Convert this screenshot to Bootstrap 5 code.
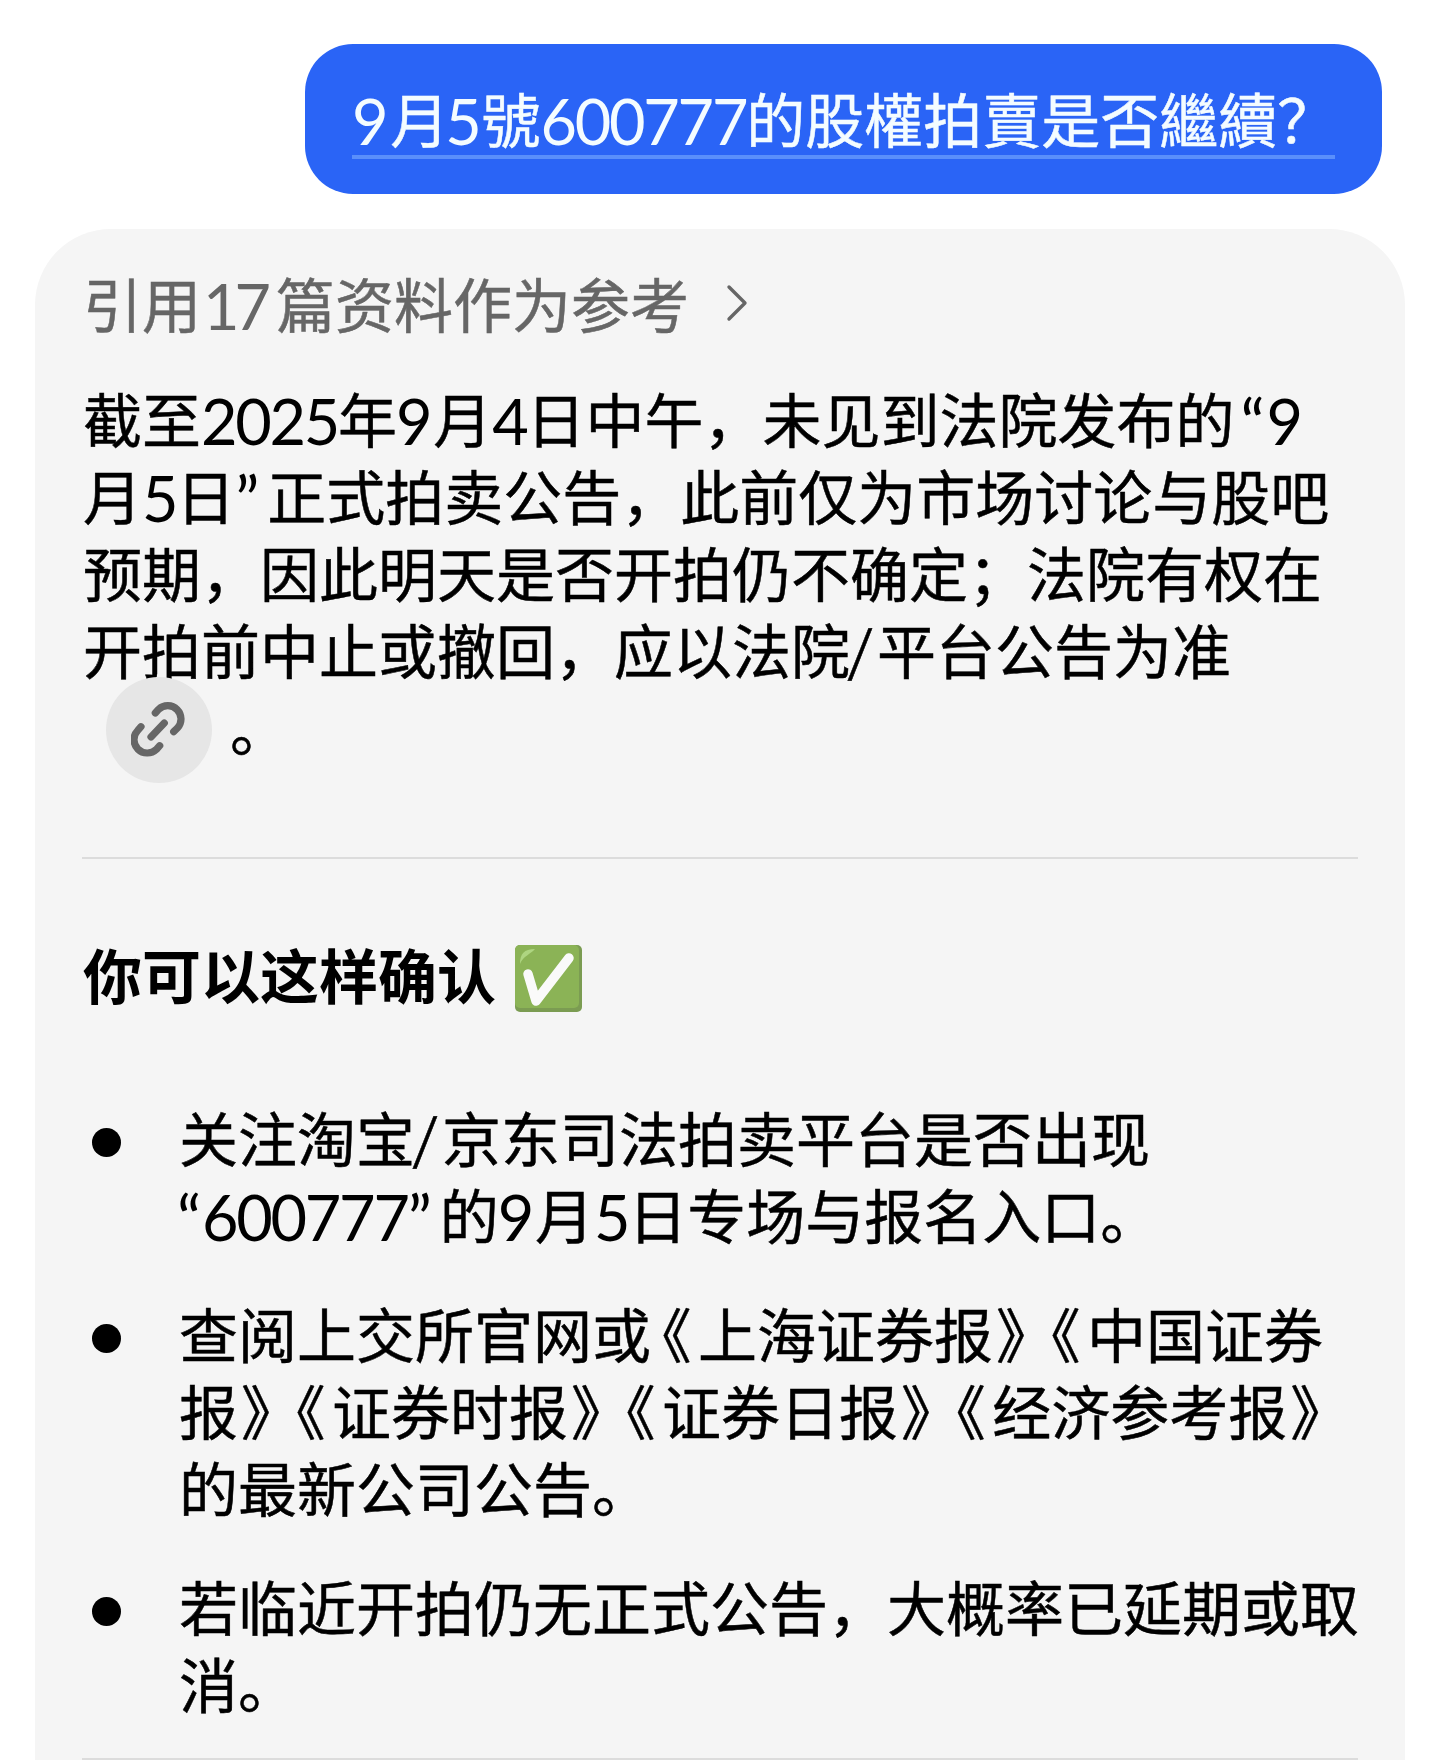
<!DOCTYPE html>
<html lang="zh-CN">
<head>
<meta charset="utf-8">
<meta name="viewport" content="width=device-width, initial-scale=1">
<title>600777</title>
<link href="https://cdn.jsdelivr.net/npm/bootstrap@5.3.0/dist/css/bootstrap.min.css" rel="stylesheet">
<style>
  body { font-family: "Noto Sans CJK SC", sans-serif; font-size: 59px; line-height: 77px; color: #000; background: #fff; font-kerning: none; text-spacing-trim: space-all; -webkit-text-stroke: .5px currentColor; }
  .chat { height: 1760px; }
  .ask { margin: 44px 58px 0 0; width: 1077px; height: 150px; border-radius: 48px; background: #2a64f6; color: #f4fcff; padding: 35px 47px 0; }
  .ask-line { height: 80px; border-bottom: 4px solid #5a8ffb; }
  .answer { margin: 35px 35px 0; padding: 35px 47px 0 48px; border-radius: 76px 76px 0 0; background: #f5f5f5; }
  .refs { color: #666; height: 77px; }
  .chev { width: 24px; height: 40px; margin-left: 36px; margin-top: 1px; }
  .body-text { margin-top: 38px; }
  .ln { height: 77px; }
  /* digits and quotes */
  .n { font-family: Lato, sans-serif; font-size: 63px; line-height: 0; letter-spacing: -2.3px; vertical-align: -2px; -webkit-text-stroke: 0; }
  .n7 { letter-spacing: -2.2px; }
  .n9 { margin-left: -1px; margin-right: 3px; }
  .ask .n9 { margin-left: 0; margin-right: 4px; }
  .n5 { margin-left: -4px; margin-right: 2px; }
  .ref-n { letter-spacing: -5px; margin-left: 2px; margin-right: 10px; }
  .q { display: inline-block; font-family: Lato, sans-serif; font-size: 66px; line-height: 0; width: 32px; vertical-align: -4px; -webkit-text-stroke: 0; }
  .q-open { padding-left: 6px; width: 32px; }
  .q-lead { width: 25px; margin-left: -2px; }
  .slash { display: inline-block; width: 27px; line-height: 0; font-size: 54px; vertical-align: 3px; transform: skewX(-5deg); }
  .bo, .bc { font-feature-settings: "halt"; }
  .bo { padding-left: 11px; padding-right: 6.5px; }
  .bc { padding-left: 3px; padding-right: 14.5px; }
  .cite { width: 106px; height: 106px; background: #e6e6e6; margin-left: 23px; margin-right: 18px; margin-top: 8px; flex: none; }
  .rule { height: 2px; background: #dcdcdc; margin-right: 0; margin-left: -1px; }
  .rule-a { margin-top: 93px; }
  .rule-b { margin-top: 37px; }
  .sub { margin-top: 76px; font-weight: 700; height: 77px; font-size: 59px; line-height: 77px; -webkit-text-stroke: 0; }
  .tick { width: 67px; height: 67px; margin-left: 19px; margin-top: 10px; }
  .tips { margin-top: 86px; }
  .tip { margin-bottom: 42px; }
  .dot { width: 29px; height: 29px; background: #000; margin: 30px 58px 0 9px; flex: none; }
</style>
</head>
<body>
<main class="chat d-flex flex-column overflow-hidden">
  <div class="ask align-self-end text-nowrap">
    <div class="ask-line"><span class="n n9">9</span>月<span class="n n5">5</span>號<span class="n">600</span><span class="n n7">777</span>的股權拍賣是否繼續？</div>
  </div>
  <section class="answer flex-grow-1 text-nowrap">
    <div class="refs d-flex align-items-center">
      <span>引用<span class="n ref-n">17</span>篇资料作为参考</span>
      <svg class="chev" viewBox="0 0 24 40" fill="none" stroke="#666" stroke-width="3.4" stroke-linecap="round" stroke-linejoin="round"><path d="M4 4 20 20 4 36"/></svg>
    </div>
    <div class="body-text">
      <div class="ln">截至<span class="n">2025</span>年<span class="n n9">9</span>月<span class="n">4</span>日中午，未见到法院发布的<span class="q q-open">“</span><span class="n">9</span></div>
      <div class="ln">月<span class="n">5</span>日<span class="q">”</span>正式拍卖公告，此前仅为市场讨论与股吧</div>
      <div class="ln">预期，因此明天是否开拍仍不确定；法院有权在</div>
      <div class="ln">开拍前中止或撤回，应以法院<span class="slash">/</span>平台公告为准</div>
      <div class="ln d-flex align-items-center">
        <span class="cite rounded-circle d-flex align-items-center justify-content-center">
          <svg width="56" height="56" viewBox="0 0 56 56" fill="none" stroke="#666" stroke-width="7.2" stroke-linecap="round"><path d="M20 35 33.300 21"/><path d="M24.300 11 27.600 7.300A13.300 13.300 0 0 1 46.400 26.100L42.700 29.700"/><path d="M10 24.700 6.600 28.600A13.300 13.300 0 0 0 25.400 47.400L28.700 43.700"/></svg>
        </span>
        <span>。</span>
      </div>
    </div>
    <div class="rule rule-a"></div>
    <h2 class="sub mb-0 d-flex">你可以这样确认
      <svg class="tick" viewBox="0 0 67 67"><rect width="67" height="67" rx="5" fill="#7b9c52"/><rect width="64" height="63" rx="5" fill="#8bb356"/><path d="M5 19C5 9 9 4 20 4 16 9 8 11 5 19Z" fill="#aed581"/><path d="M13 29 21 56 54 13" fill="none" stroke="#fafafa" stroke-width="9.5" stroke-linecap="round" stroke-linejoin="round"/></svg>
    </h2>
    <ul class="tips list-unstyled mb-0">
      <li class="tip d-flex"><span class="dot rounded-circle"></span>
        <div>
          <div class="ln">关注淘宝<span class="slash">/</span>京东司法拍卖平台是否出现</div>
          <div class="ln"><span class="q q-lead">“</span><span class="n">600</span><span class="n n7">777</span><span class="q">”</span>的<span class="n n9">9</span>月<span class="n">5</span>日专场与报名入口。</div>
        </div>
      </li>
      <li class="tip d-flex"><span class="dot rounded-circle"></span>
        <div>
          <div class="ln">查阅上交所官网或<span class="bo">《</span>上海证券报<span class="bc">》</span><span class="bo">《</span>中国证券</div>
          <div class="ln">报<span class="bc">》</span><span class="bo">《</span>证券时报<span class="bc">》</span><span class="bo">《</span>证券日报<span class="bc">》</span><span class="bo">《</span>经济参考报<span class="bc">》</span></div>
          <div class="ln">的最新公司公告。</div>
        </div>
      </li>
      <li class="d-flex"><span class="dot rounded-circle"></span>
        <div>
          <div class="ln">若临近开拍仍无正式公告，大概率已延期或取</div>
          <div class="ln">消。</div>
        </div>
      </li>
    </ul>
    <div class="rule rule-b"></div>
  </section>
</main>
<script src="https://cdn.jsdelivr.net/npm/bootstrap@5.3.0/dist/js/bootstrap.bundle.min.js"></script>
</body>
</html>
